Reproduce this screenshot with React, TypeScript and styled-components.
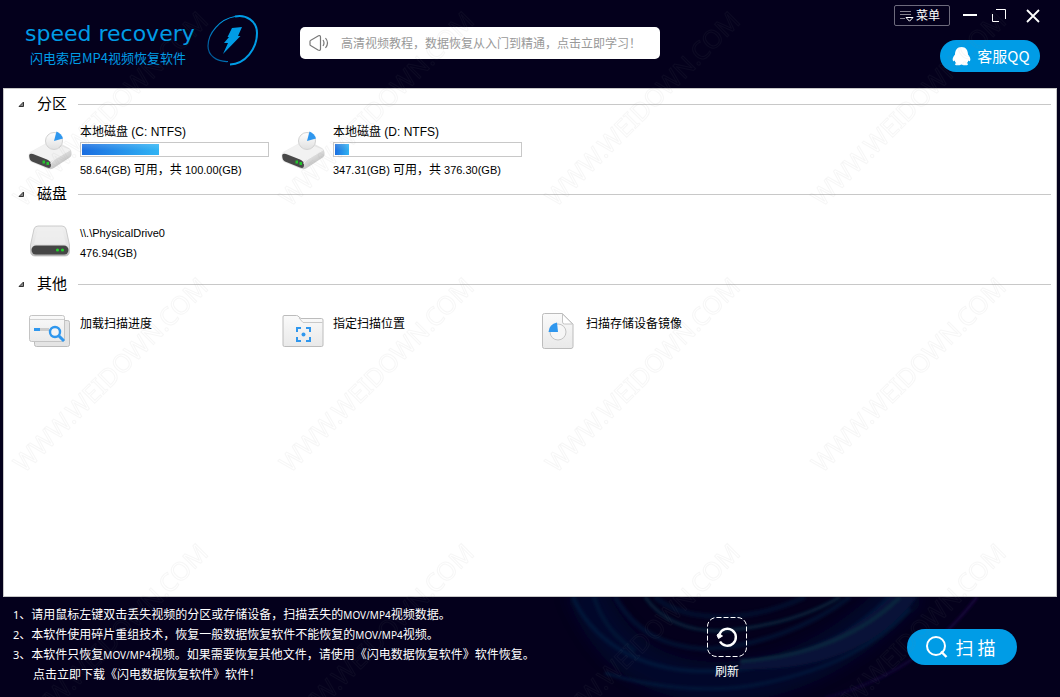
import React from "react";
import styled, { createGlobalStyle } from "styled-components";

const GlobalStyle = createGlobalStyle`
  * { box-sizing: border-box; }
  body {
    margin: 0;
    background: #04001c;
    color: #000;
    font: 12px/20px "Liberation Sans", "Noto Sans CJK SC", sans-serif;
  }
  button {
    margin: 0;
    padding: 0;
    border: 0;
    background: none;
    color: inherit;
    font: inherit;
    cursor: pointer;
  }
  a { color: inherit; text-decoration: none; }
  h1, h2, p, ol, ul { margin: 0; padding: 0; font-weight: 400; list-style: none; }
  svg { display: block; flex: none; }
`;

const Window = styled.div`
  display: flex;
  flex-direction: column;
  min-height: 100vh;
`;

const Header = styled.header`
  display: flex;
  align-items: flex-start;
  min-height: 88px;
  padding: 0 20px 0 25px;
`;

const Brand = styled.div`
  display: flex;
  align-items: flex-start;
  gap: 9px;
  width: 275px;
  padding-top: 14px;
  color: #009ce6;
`;

const BrandText = styled.div`
  width: 173px;
  padding-top: 6px;
  white-space: nowrap;
`;

const BrandName = styled.p`
  font: 22px/28px "DejaVu Sans", sans-serif;
`;

const BrandTitle = styled.h1`
  padding-left: 5px;
  font: 13px/20px "Noto Sans CJK SC", sans-serif;
`;

const Notice = styled.a`
  display: flex;
  align-items: center;
  gap: 12px;
  width: 360px;
  height: 32px;
  margin-top: 27px;
  padding-left: 9px;
  border-radius: 5px;
  background: #fff;
  color: #999;
  font-family: "Noto Sans CJK SC", sans-serif;
  white-space: nowrap;
`;

const HeaderSide = styled.div`
  display: flex;
  flex-direction: column;
  align-items: flex-end;
  gap: 14px;
  margin-left: auto;
  padding-top: 5px;
  color: #fff;
`;

const WindowControls = styled.div`
  display: flex;
  align-items: center;
  gap: 13px;
`;

const MenuButton = styled.button`
  display: flex;
  align-items: center;
  gap: 2px;
  width: 56px;
  height: 21px;
  padding-left: 4px;
  border: 1px solid #6d6a7c;
  border-radius: 2px;
`;

const ControlButton = styled.button`
  width: 14px;
  height: 16px;
  &:last-child { margin-left: 5px; }
`;

const ControlGroup = styled.div`
  display: flex;
  gap: 15px;
`;

const PillButton = styled.button<{ $large?: boolean }>`
  display: flex;
  align-items: center;
  justify-content: center;
  gap: ${(p) => (p.$large ? 7 : 6)}px;
  width: ${(p) => (p.$large ? 110 : 100)}px;
  height: ${(p) => (p.$large ? 36 : 32)}px;
  padding: ${(p) => (p.$large ? "0 2px 0 0" : "0 0 0 2px")};
  border-radius: 18px;
  background: #009ce6;
  color: #fff;
  font: ${(p) => (p.$large ? 18 : 15)}px/24px "Noto Sans CJK SC", sans-serif;
  white-space: nowrap;
`;

const Panel = styled.main`
  flex: 1;
  margin: 0 3px;
  padding: 5px 5px 5px 14px;
  border: 1px solid #c8c8c8;
  background: #fff;
`;

const SectionHeading = styled.h2`
  display: flex;
  align-items: center;
  gap: 12px;
  height: 20px;
  &::after {
    content: "";
    flex: 1;
    height: 1px;
    background: #c8c8c8;
  }
`;

const SectionToggle = styled.button`
  display: flex;
  align-items: center;
  gap: 12px;
  width: 48px;
  font-size: 15px;
  white-space: nowrap;
`;

const ItemGrid = styled.ul`
  display: grid;
  grid-template-columns: repeat(auto-fill, 253px);
  padding: 4px 0 0 10px;
`;

const Item = styled.button`
  display: flex;
  align-items: center;
  gap: 8px;
  height: 66px;
  text-align: left;
`;

const ItemIcon = styled.span`
  display: flex;
  justify-content: center;
  width: 44px;
`;

const ItemText = styled.span<{ $withBar?: boolean }>`
  display: flex;
  flex-direction: column;
  min-height: 42px;
  padding-top: ${(p) => (p.$withBar ? 0 : 4)}px;
  white-space: nowrap;
`;

const Small = styled.span`
  font-size: 11px;
`;

const UsageBar = styled.span`
  display: block;
  width: 189px;
  height: 15px;
  margin-bottom: 3px;
  padding: 1px;
  border: 1px solid #c8c8c8;
`;

const UsageFill = styled.span`
  display: block;
  height: 11px;
  background: linear-gradient(rgba(255, 255, 255, 0.16), rgba(255, 255, 255, 0) 60%),
    linear-gradient(90deg, #1a6de0, #30b4f4);
`;

const Footer = styled.footer`
  position: relative;
  display: flex;
  align-items: flex-start;
  min-height: 100px;
  padding: 7px 43px 0 13px;
  overflow: hidden;
  color: #fff;
`;

const Waves = styled.svg`
  position: absolute;
  top: 0;
  right: 0;
  opacity: 0.65;
`;

const Tips = styled.ol`
  flex: 1;
  white-space: nowrap;
  font-family: "Noto Sans CJK SC", sans-serif;
`;

const Tip = styled.li`
  &:last-child { padding-left: 20px; }
`;

const Digit = styled.span`
  font: 11px/16px "Noto Sans", sans-serif;
`;

const Latin = styled.span`
  font: 10px/16px "Noto Sans", sans-serif;
`;

const Actions = styled.div`
  position: relative;
  display: flex;
  align-items: flex-start;
  gap: 160px;
  padding-top: 13px;
`;

const RefreshButton = styled.button`
  display: flex;
  flex-direction: column;
  align-items: center;
  gap: 5px;
  width: 40px;
`;

const ScanSlot = styled.div`
  padding-top: 12px;
`;

const Watermark = styled.svg`
  position: fixed;
  inset: 0;
  width: 100%;
  height: 100%;
  pointer-events: none;
`;

const LogoMark = () => (
  <svg width="52" height="52" viewBox="0 0 52 52" fill="none" aria-hidden="true">
    <defs>
      <linearGradient id="ring" x1="1" y1="0" x2="0" y2="1">
        <stop offset="0.3" stopColor="#009ce6" />
        <stop offset="1" stopColor="#004a86" />
      </linearGradient>
    </defs>
    <path d="M28 2.500C39 0 50 7 50 19C50 35 38 50 23 50.500" stroke="#009ce6" strokeWidth="2" />
    <path d="M28 2.500C13 5 1 19 1 32C1 41 9 48 21 47.500" stroke="url(#ring)" strokeWidth="1.200" />
    <path d="M25 14L35 13L31 22H33.500L16 40L21 29H17L22 23H20.500Z" fill="#009ce6" />
  </svg>
);

const SpeakerIcon = () => (
  <svg width="20" height="18" viewBox="0 0 20 18" fill="none" stroke="#777" strokeWidth="1.200" aria-hidden="true">
    <path d="M1.500 6.500Q1 6.500 1 7.500V10.500Q1 11.500 2 11.800L9 16Q11.500 17 11.500 15V3Q11.500 1 9.500 1.800Z" />
    <path d="M14 6Q16 9 14 12M16.500 4Q20.500 9 16.500 14" />
  </svg>
);

const MenuIcon = () => (
  <svg width="15" height="12" viewBox="0 0 15 12" fill="none" stroke="#aaa8b5" aria-hidden="true">
    <path d="M1 1.500H12M1 4.500H12M1 8.500H6" stroke="#85828f" />
    <path d="M7 7.500H14L10.500 11.200Z" stroke="#fff" />
  </svg>
);

const QqIcon = () => (
  <svg width="19" height="19" viewBox="0 0 19 19" fill="#fff" aria-hidden="true">
    <path d="M9.500 0C14 0 16 3.500 16 7.500C18 10 19 12 18 14C17.500 14.500 17 14 16.300 13.500Q16 15 15 16C18 18.500 13 19 9.500 17.500C6 19 1 18.500 4 16Q3 15 2.700 13.500C2 14 1.500 14.500 1 14C0 12 1 10 3 7.500C3 3.500 5 0 9.500 0Z" />
  </svg>
);

const ToggleIcon = () => (
  <svg width="7" height="7" viewBox="0 0 7 7" aria-hidden="true">
    <path d="M5.500 1V5.500H1Z" fill="#888" stroke="#333" />
  </svg>
);

const PartitionIcon = () => (
  <svg width="44" height="40" viewBox="0 0 44 40" aria-hidden="true">
    <defs>
      <linearGradient id="partBody" x1="0" y1="0" x2="1" y2="1">
        <stop offset="0" stopColor="#f8f8f8" />
        <stop offset="0.600" stopColor="#e2e2e2" />
        <stop offset="1" stopColor="#aaa" />
      </linearGradient>
      <linearGradient id="disc" x1="0" y1="0" x2="0" y2="1">
        <stop offset="0" stopColor="#fff" />
        <stop offset="1" stopColor="#e0e0e0" />
      </linearGradient>
    </defs>
    <path d="M2 21L22 10Q25 9 28 10L41 17Q44 19 43.500 24Q43 26 41 27L25 37.500Q22 39 18 37L3 31Q0 29 0.500 24Q1 22 2 21Z" fill="url(#partBody)" />
    <path d="M3 21L22 11L42 18.500L25 29Q22 31 19 29Z" fill="#f2f2f2" />
    <path d="M1.200 24Q2 22 5 23L19 28.500Q23 30 23 34Q23 38 19 36.500L4 30.500Q1 29 1.200 24Z" fill="#484848" />
    <path d="M22.500 33Q24 30 27 28L42 19" fill="none" stroke="#fff" opacity="0.600" />
    <circle cx="26" cy="10" r="8.500" fill="url(#disc)" stroke="#d2d2d2" />
    <path d="M26 10L28.500 0.500Q33.500 2.500 35 7.500Z" fill="#2f97ee" />
    <rect x="14.500" y="29.500" width="2.500" height="3" fill="#23c52c" />
    <rect x="18.500" y="31" width="2.500" height="3" fill="#23c52c" />
  </svg>
);

const DiskIcon = () => (
  <svg width="40" height="32" viewBox="0 0 40 32" aria-hidden="true">
    <defs>
      <linearGradient id="diskTop" x1="0" y1="0" x2="0" y2="1">
        <stop offset="0" stopColor="#f0f0f0" />
        <stop offset="0.700" stopColor="#e2e2e2" />
        <stop offset="1" stopColor="#aaa" />
      </linearGradient>
    </defs>
    <path d="M8 1H32Q35 1 36 4L39.500 20V26Q39.500 31 35 31H5Q0.500 31 0.500 26V20L4 4Q5 1 8 1Z" fill="url(#diskTop)" stroke="#c0c0c0" strokeWidth="0.800" />
    <path d="M8 3H32L36 19H4Z" fill="#efefef" opacity="0.700" />
    <rect x="1.500" y="20.500" width="37" height="9" rx="4.500" fill="#454545" />
    <circle cx="27.500" cy="25" r="1.600" fill="#23d02c" />
    <circle cx="32.500" cy="25" r="1.600" fill="#23d02c" />
  </svg>
);

const SheetGradient = ({ id }: { id: string }) => (
  <defs>
    <linearGradient id={id} x1="0" y1="0" x2="0" y2="1">
      <stop offset="0" stopColor="#fafafa" />
      <stop offset="1" stopColor="#e9e9e9" />
    </linearGradient>
  </defs>
);

const ProgressIcon = () => (
  <svg width="42" height="34" viewBox="0 0 42 34" fill="none" aria-hidden="true">
    <SheetGradient id="progressSheet" />
    <rect x="5.500" y="6.500" width="35" height="26" rx="2" fill="#e4e4e4" stroke="#bcbcbc" />
    <rect x="0.500" y="1.500" width="35" height="26" rx="2" fill="url(#progressSheet)" stroke="#c4c4c4" />
    <path d="M1 5.500H35" stroke="#d2d2d2" />
    <path d="M5 15.500H11" stroke="#2f97ee" strokeWidth="3" />
    <path d="M11 15.500H20" stroke="#ccc" strokeWidth="3" />
    <circle cx="26" cy="18" r="5" fill="#f4f4f4" stroke="#2f97ee" strokeWidth="2.400" />
    <path d="M30 22L35 27" stroke="#2f97ee" strokeWidth="3" />
  </svg>
);

const FolderIcon = () => (
  <svg width="42" height="34" viewBox="0 0 42 34" fill="none" aria-hidden="true">
    <SheetGradient id="folderSheet" />
    <path d="M2 1.500H14.500Q16 1.500 17 3L19 4.500H39.500Q41 4.500 41 6V31Q41 32.500 39.500 32.500H2.500Q1 32.500 1 31V3Q1 1.500 2 1.500Z" fill="url(#folderSheet)" stroke="#bcbcbc" />
    <path d="M17 4L21 8.500H40.500" stroke="#c8c8c8" />
    <path d="M15 18V14H19M24 14H28V18M28 23V27H24M19 27H15V23" stroke="#2f97ee" strokeWidth="2" />
    <circle cx="21.500" cy="20.500" r="2" fill="#2f97ee" />
  </svg>
);

const ImageIcon = () => (
  <svg width="36" height="36" viewBox="-4 0 36 36" fill="none" aria-hidden="true">
    <SheetGradient id="imageSheet" />
    <path d="M2.500 0.500H20.500L31 11V33.500Q31 35.500 29 35.500H2.500Q0.500 35.500 0.500 33.500V2.500Q0.500 0.500 2.500 0.500Z" fill="url(#imageSheet)" stroke="#bcbcbc" />
    <path d="M20.500 1V9Q20.500 11 22.500 11H30.500Z" fill="#fff" stroke="#c4c4c4" />
    <circle cx="16" cy="19" r="8" fill="#f6f6f6" stroke="#c4c4c4" />
    <path d="M16 19H6.500Q7 11 15 9.500Z" fill="#2f97ee" />
  </svg>
);

const RefreshIcon = () => (
  <svg width="40" height="40" viewBox="0 0 40 40" fill="none" stroke="#fff" aria-hidden="true">
    <rect x="0.500" y="0.500" width="39" height="39" rx="9" strokeDasharray="5 2" />
    <path d="M12.500 17A8.500 8.500 0 1 1 13 24.500" strokeWidth="2.400" />
    <path d="M10 18L12 16.500L15.500 19L11.500 21.500Z" fill="#fff" />
  </svg>
);

const ScanIcon = () => (
  <svg width="22" height="22" viewBox="0 0 22 22" fill="none" stroke="#fff" strokeWidth="2" aria-hidden="true">
    <circle cx="10" cy="10" r="9" />
    <path d="M15 15.500L20.500 21" strokeWidth="2.400" />
  </svg>
);

const WavePattern = () => (
  <Waves width="520" height="100" viewBox="0 0 520 100" fill="none" aria-hidden="true">
    <defs>
      <filter id="soft" x="-10%" y="-10%" width="120%" height="120%">
        <feGaussianBlur stdDeviation="1.5" />
      </filter>
      <filter id="haze" x="-20%" y="-20%" width="140%" height="140%">
        <feGaussianBlur stdDeviation="7" />
      </filter>
      <linearGradient id="violet" x1="0" y1="1" x2="1" y2="0">
        <stop offset="0" stopColor="#2a1070" stopOpacity="0.400" />
        <stop offset="1" stopColor="#35106a" />
      </linearGradient>
    </defs>
    <g filter="url(#haze)">
      <path d="M45 -10C70 60 120 85 180 85C260 85 320 40 370 -10" stroke="#04103a" strokeWidth="40" opacity="0.800" />
    </g>
    <g filter="url(#soft)">
      <path d="M33 0C50 40 95 73 160 74C250 76 310 40 350 0" stroke="#06335a" strokeWidth="4" opacity="0.600" />
      <path d="M54 0C62 25 75 40 95 54" stroke="#06264a" strokeWidth="4" opacity="0.700" />
      <path d="M75 0C95 35 125 50 165 52C215 50 270 30 310 0" stroke="#062a4c" strokeWidth="5" opacity="0.600" />
      <path d="M105 0C125 28 155 34 180 34C230 30 270 18 300 0" stroke="#0c4658" strokeWidth="3" opacity="0.800" />
      <path d="M200 64C250 62 310 40 350 0H377C340 50 280 75 200 72Z" fill="#081a46" />
      <path d="M200 64C270 60 325 35 360 0" stroke="#104052" strokeWidth="3" />
      <path d="M65 76C110 90 170 98 225 86C290 72 335 50 370 12" stroke="#063056" strokeWidth="3" opacity="0.700" />
      <path d="M115 0C140 22 200 30 265 0" stroke="#061c40" strokeWidth="5" opacity="0.700" />
    </g>
    <path d="M285 101C345 85 395 55 437 0" stroke="url(#violet)" strokeWidth="2" filter="url(#soft)" />
  </Waves>
);

const WatermarkLayer = () => (
  <Watermark aria-hidden="true">
    <defs>
      <pattern id="mark" width="266" height="266" y="4" patternUnits="userSpaceOnUse">
        <text
          transform="translate(117 111) rotate(-45)"
          textAnchor="middle"
          fontFamily="Noto Sans, sans-serif"
          fontSize="25"
          fill="none"
          stroke="#808080"
          strokeOpacity="0.07"
          strokeWidth="1"
        >
          WWW.WEIDOWN.COM
        </text>
      </pattern>
    </defs>
    <rect width="100%" height="100%" fill="url(#mark)" />
  </Watermark>
);

interface Partition {
  name: string;
  free: string;
  total: string;
  fill: number;
}

const partitions: Partition[] = [
  { name: "本地磁盘 (C: NTFS)", free: "58.64(GB)", total: "100.00(GB)", fill: 41.36 },
  { name: "本地磁盘 (D: NTFS)", free: "347.31(GB)", total: "376.30(GB)", fill: 7.7 },
];

const tools = [
  { label: "加载扫描进度", Icon: ProgressIcon },
  { label: "指定扫描位置", Icon: FolderIcon },
  { label: "扫描存储设备镜像", Icon: ImageIcon },
];

const Section = ({ title, children }: { title: string; children: React.ReactNode }) => (
  <section>
    <SectionHeading>
      <SectionToggle aria-expanded="true">
        <ToggleIcon />
        {title}
      </SectionToggle>
    </SectionHeading>
    <ItemGrid>{children}</ItemGrid>
  </section>
);

export default function App() {
  return (
    <Window>
      <GlobalStyle />
      <Header>
        <Brand>
          <BrandText>
            <BrandName>speed recovery</BrandName>
            <BrandTitle>闪电索尼MP4视频恢复软件</BrandTitle>
          </BrandText>
          <LogoMark />
        </Brand>
        <Notice href="#tutorial">
          <SpeakerIcon />
          高清视频教程，数据恢复从入门到精通，点击立即学习！
        </Notice>
        <HeaderSide>
          <WindowControls>
            <MenuButton>
              <MenuIcon />
              菜单
            </MenuButton>
            <ControlGroup>
              <ControlButton aria-label="最小化">
                <svg width="14" height="16" fill="none" stroke="#fff" strokeWidth="2">
                  <path d="M0 7H14" />
                </svg>
              </ControlButton>
              <ControlButton aria-label="最大化">
                <svg width="14" height="16" fill="none" stroke="#fff">
                  <path d="M4 1.500H13.500V11M0.500 6V13.500H7" />
                </svg>
              </ControlButton>
              <ControlButton aria-label="关闭">
                <svg width="14" height="16" fill="none" stroke="#fff" strokeWidth="1.800">
                  <path d="M1 2L13 14M13 2L1 14" />
                </svg>
              </ControlButton>
            </ControlGroup>
          </WindowControls>
          <PillButton>
            <QqIcon />
            客服QQ
          </PillButton>
        </HeaderSide>
      </Header>

      <Panel>
        <Section title="分区">
          {partitions.map((p) => (
            <li key={p.name}>
              <Item>
                <ItemIcon>
                  <PartitionIcon />
                </ItemIcon>
                <ItemText $withBar>
                  <span>{p.name}</span>
                  <UsageBar>
                    <UsageFill style={{ width: `${p.fill}%` }} />
                  </UsageBar>
                  <span>
                    <Small>{p.free} </Small>可用，共<Small> {p.total}</Small>
                  </span>
                </ItemText>
              </Item>
            </li>
          ))}
        </Section>
        <Section title="磁盘">
          <li>
            <Item>
              <ItemIcon>
                <DiskIcon />
              </ItemIcon>
              <ItemText>
                <Small>{"\\\\.\\PhysicalDrive0"}</Small>
                <Small>476.94(GB)</Small>
              </ItemText>
            </Item>
          </li>
        </Section>
        <Section title="其他">
          {tools.map(({ label, Icon }) => (
            <li key={label}>
              <Item>
                <ItemIcon>
                  <Icon />
                </ItemIcon>
                <ItemText>{label}</ItemText>
              </Item>
            </li>
          ))}
        </Section>
      </Panel>

      <Footer>
        <WavePattern />
        <Tips>
          <Tip>
            <Digit>1</Digit>、请用鼠标左键双击丢失视频的分区或存储设备，扫描丢失的<Latin>MOV/MP4</Latin>视频数据。
          </Tip>
          <Tip>
            <Digit>2</Digit>、本软件使用碎片重组技术，恢复一般数据恢复软件不能恢复的<Latin>MOV/MP4</Latin>视频。
          </Tip>
          <Tip>
            <Digit>3</Digit>、本软件只恢复<Latin>MOV/MP4</Latin>视频。如果需要恢复其他文件，请使用《闪电数据恢复软件》软件恢复。
          </Tip>
          <Tip>
            <a href="#download">点击立即下载《闪电数据恢复软件》软件！</a>
          </Tip>
        </Tips>
        <Actions>
          <RefreshButton>
            <RefreshIcon />
            刷新
          </RefreshButton>
          <ScanSlot>
            <PillButton $large>
              <ScanIcon />
              扫 描
            </PillButton>
          </ScanSlot>
        </Actions>
      </Footer>
      <WatermarkLayer />
    </Window>
  );
}
